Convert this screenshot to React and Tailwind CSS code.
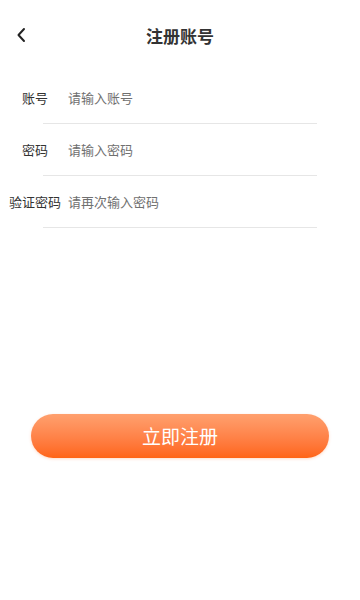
const FIELDS = [
  { label: '账号', placeholder: '请输入账号', type: 'text' },
  { label: '密码', placeholder: '请输入密码', type: 'password' },
  { label: '验证密码', placeholder: '请再次输入密码', type: 'password' },
]

export default function App() {
  return (
    <div
      className="w-[360px] h-[600px] bg-white flex flex-col"
      style={{ fontFamily: '"Noto Sans CJK SC", "Noto Sans", sans-serif' }}
    >
      <header className="relative h-[70px] flex items-center justify-center">
        <button type="button" className="absolute left-[14px] top-[26px] w-[14px] h-[18px] flex items-center justify-center">
          <svg width="10" height="16" viewBox="0 0 10 16" fill="none">
            <path d="M8 2 L2.5 8 L8 14" stroke="#222" strokeWidth="2" strokeLinecap="round" strokeLinejoin="round" />
          </svg>
        </button>
        <h1 className="text-[17px] font-bold text-[#333] leading-none">注册账号</h1>
      </header>

      <div className="pt-[2px]">
        {FIELDS.map((f) => (
          <div key={f.label}>
            <div className="h-[51px] flex items-center">
              <span className="ml-[7px] w-[56px] text-center text-[13px] text-[#333]">{f.label}</span>
              <input
                type={f.type}
                placeholder={f.placeholder}
                className="ml-[5px] flex-1 mr-[43px] text-[13px] text-[#333] outline-none placeholder:text-[#707070] bg-transparent"
              />
            </div>
            <div className="ml-[43px] w-[274px] h-px bg-[#e6e6e6]" />
          </div>
        ))}
      </div>

      <button
        type="button"
        className="mt-[186px] mx-auto w-[298px] h-[44px] rounded-full bg-gradient-to-b from-[#ffa06e] to-[#ff6414] text-white text-[19px] flex items-center justify-center shadow-[0_1px_3px_rgba(255,110,40,0.25)]"
      >
        立即注册
      </button>
    </div>
  )
}
